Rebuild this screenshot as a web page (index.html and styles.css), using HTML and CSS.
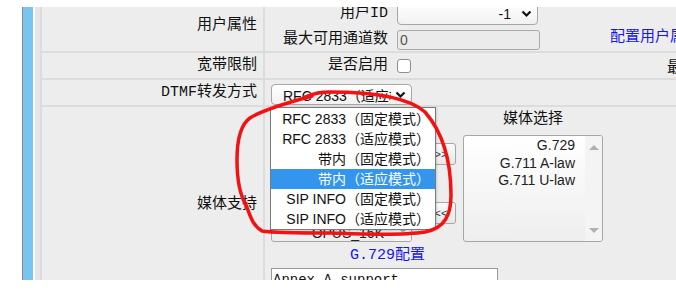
FILE: index.html
```html
<!DOCTYPE html>
<html>
    <head lang="zh">
        <meta charset="UTF-8">
        <title>用户配置</title>
        <link rel="stylesheet" href="styles.css">
    </head>
    <body>
        <div class="page">
            <div class="rail"></div>
            <div class="main">
                <div class="form">
                    <div class="row r-user">
                        <div class="lbl">用户属性</div>
                        <div class="val">
                            <div class="sub">
                                <span class="k">用户ID</span>
                                <span class="sel sel-id"><span class="v">-1</span><svg class="chev" width="11" height="8" viewBox="0 0 11 8"><polyline points="1.5,1.5 5.5,5.5 9.5,1.5"/></svg></span>
                                <span class="k">最大可用通道数</span>
                                <span class="inp">0</span>
                            </div>
                            <a class="link cfg">配置用户属性</a>
                        </div>
                    </div>
                    <div class="row r-bw">
                        <div class="lbl">宽带限制</div>
                        <div class="val">
                            <span class="k">是否启用</span>
                            <span class="chk"></span>
                            <span class="more">最大带宽</span>
                        </div>
                    </div>
                    <div class="row r-dtmf">
                        <div class="lbl">DTMF转发方式</div>
                        <div class="val">
                            <span class="sel sel-dtmf"><span class="v">RFC 2833（适应模式）</span><svg class="chev" width="11" height="8" viewBox="0 0 11 8"><polyline points="1.5,1.5 5.5,5.5 9.5,1.5"/></svg></span>
                        </div>
                    </div>
                    <div class="row r-media">
                        <div class="lbl">媒体支持</div>
                        <div class="val">
                            <div class="media">
                                <div class="hd">可选媒体</div>
                                <div></div>
                                <div class="hd">媒体选择</div>
                                <div class="list">
                                    <ul>
                                        <li>G.723</li>
                                        <li>G.726-32</li>
                                        <li>iLBC</li>
                                        <li>AMR</li>
                                        <li>OPUS_8K</li>
                                        <li>OPUS_16K</li>
                                    </ul>
                                    <div class="bar"><span class="up"></span><span class="dn"></span></div>
                                </div>
                                <div class="btns">
                                    <span class="btn">&gt;&gt;</span>
                                    <span class="btn">&lt;&lt;</span>
                                </div>
                                <div class="list">
                                    <ul>
                                        <li>G.729</li>
                                        <li>G.711 A-law</li>
                                        <li>G.711 U-law</li>
                                    </ul>
                                    <div class="bar"><span class="up"></span><span class="dn"></span></div>
                                </div>
                            </div>
                            <a class="link g729">G.729配置</a>
                            <div class="annex">Annex A support</div>
                        </div>
                    </div>
                </div>
            </div>
        </div>

        <!-- 展开的下拉框 -->
        <ul class="drop">
            <li>RFC 2833（固定模式）</li>
            <li>RFC 2833（适应模式）</li>
            <li>带内（固定模式）</li>
            <li class="on">带内（适应模式）</li>
            <li>SIP INFO（固定模式）</li>
            <li>SIP INFO（适应模式）</li>
        </ul>

        <svg class="mark" width="676" height="292" viewBox="0 0 676 292">
            <path d="M 312 96 C 290 102, 262 110, 250 118 C 240 125, 237 140, 237 160 C 237 180, 240 195, 246 205 C 250 215, 252 225, 262 231 C 275 233, 300 233, 330 233 C 360 234, 400 236, 425 232 C 445 228, 451 215, 451 195 C 451 165, 445 135, 425 112 C 408 97, 370 92, 330 92 C 322 92, 314 93, 305 97"/>
        </svg>
    </body>
</html>
```

FILE: styles.css
```css
*{
    margin:0;
    padding:0;
    box-sizing:border-box;
}
ul,ol{
    list-style:none;
}
body{
    width:676px;
    height:292px;
    overflow:hidden;
    position:relative;
    background:#fff;
    font-family:"Liberation Mono","Noto Sans CJK SC",monospace;
    font-size:15px;
    color:#111;
}
.page{
    display:flex;
    margin:7px 0 0 22px;
    height:273px;
    overflow:hidden;
}
.rail{
    width:11px;
    flex:none;
    border-left:1px solid #8a8a8a;
    background:#79c5f0;
    margin-right:2px;
}
.main{
    flex:1;
    background:#ededed;
    border-left:5px solid #e6e6e6;
}
.form{
    margin-top:-7px;
    border-left:2px solid #dcdcdc;
    width:700px;
}
.row{
    display:grid;
    grid-template-columns:223px 1fr;
    border-bottom:2px solid #dcdcdc;
}
.lbl{
    display:flex;
    align-items:center;
    justify-content:flex-end;
    padding-right:6px;
    border-right:2px solid #dcdcdc;
    line-height:20px;
    white-space:nowrap;
}
.val{
    padding-left:6px;
    display:flex;
}
.k{
    text-align:right;
    line-height:20px;
    white-space:nowrap;
}

/* 用户属性 */
.r-user{
    height:53px;
}
.r-user .val{
    padding-top:3px;
}
.sub{
    display:grid;
    grid-template-columns:117px 143px;
    grid-template-rows:22px 20px;
    column-gap:9px;
    row-gap:5px;
    align-items:center;
}
.sub .k{
    line-height:16px;
}
.sel{
    display:flex;
    align-items:center;
    height:22px;
    background:linear-gradient(#ffffff,#f1f1f1);
    border:1px solid #a6a6a6;
    border-radius:4px;
    font-family:"Liberation Sans","Noto Sans CJK SC",sans-serif;
    font-size:14px;
    overflow:hidden;
}
.sel .v{
    flex:1;
    white-space:nowrap;
    overflow:hidden;
}
.chev{
    flex:none;
    fill:none;
    stroke:#111;
    stroke-width:2.2;
}
.sel-id{
    width:141px;
}
.sel-id .v{
    text-align:right;
    padding-right:10px;
}
.sel-id .chev{
    margin-right:5px;
}
.inp{
    height:20px;
    background:#ebebeb;
    border:1px solid #a9a9a9;
    border-radius:3px;
    font-family:"Liberation Sans",sans-serif;
    font-size:14px;
    line-height:18px;
    padding-left:2px;
    color:#555;
}
.link{
    color:#1616e6;
    white-space:nowrap;
    line-height:20px;
}
.cfg{
    margin:25px 0 0 70px;
}

/* 宽带限制 */
.r-bw{
    height:27px;
}
.r-bw .val{
    align-items:center;
}
.r-bw .k{
    width:117px;
}
.chk{
    width:14px;
    height:14px;
    margin-left:9px;
    background:#fff;
    border:1px solid #8f8f8f;
    border-radius:3px;
}
.more{
    margin-left:256px;
    white-space:nowrap;
}

/* DTMF */
.r-dtmf{
    height:27px;
}
.r-dtmf .val{
    padding-top:4px;
}
.sel-dtmf{
    width:141px;
    height:21px;
}
.sel-dtmf .v{
    padding-left:11px;
    margin-right:4px;
}
.sel-dtmf .chev{
    margin-right:5px;
}

/* 媒体支持 */
.r-media{
    height:198px;
}
.r-media .val{
    flex-direction:column;
    padding-top:3px;
}
.media{
    display:grid;
    grid-template-columns:141px 51px 140px;
    grid-template-rows:20px 107px;
    row-gap:5px;
}
.hd{
    text-align:center;
    line-height:20px;
}
.list{
    display:flex;
    background:linear-gradient(#ffffff,#eeeeee);
    border:1px solid #a6a6a6;
    border-radius:3px;
    overflow:hidden;
    font-family:"Liberation Sans",sans-serif;
    font-size:14px;
}
.list ul{
    flex:1;
    padding:1px 10px 0 0;
    text-align:right;
    color:#222;
}
.list li{
    line-height:17.5px;
}
.bar{
    width:17px;
    display:flex;
    flex-direction:column;
    justify-content:space-between;
    align-items:center;
    padding:9px 0 8px;
    background:#f4f4f4;
}
.up,.dn{
    width:0;
    height:0;
    border-left:5px solid transparent;
    border-right:5px solid transparent;
}
.up{
    border-bottom:5px solid #b0b0b0;
}
.dn{
    border-top:5px solid #b0b0b0;
}
.btns{
    display:flex;
    flex-direction:column;
    align-items:flex-end;
    padding:8px 7px 0 0;
    gap:37px;
}
.btn{
    width:30px;
    height:22px;
    border:1px solid #a6a6a6;
    border-radius:3px;
    background:linear-gradient(#fafafa,#e8e8e8);
    font-family:"Liberation Sans",sans-serif;
    font-size:11px;
    line-height:20px;
    text-align:center;
    color:#333;
}
.g729{
    margin:4px 0 0 79px;
}
.annex{
    margin-top:2px;
    width:227px;
    height:24px;
    background:#fff;
    border:1px solid #9a9a9a;
    font-size:14px;
    line-height:22px;
    padding-left:1px;
}

/* 展开列表 */
.drop{
    position:absolute;
    left:270px;
    top:107px;
    width:166px;
    padding-top:1px;
    background:#fff;
    border:1px solid #7a7a7a;
    box-shadow:1px 1px 2px rgba(0,0,0,0.15);
    font-family:"Liberation Sans","Noto Sans CJK SC",sans-serif;
    font-size:14px;
    color:#111;
    text-align:right;
}
.drop li{
    height:20px;
    line-height:20px;
    padding-right:5px;
    white-space:nowrap;
}
.drop .on{
    background:#3395ee;
    color:#fff;
}

.mark{
    position:absolute;
    left:0;
    top:0;
    pointer-events:none;
}
.mark path{
    fill:none;
    stroke:#f21212;
    stroke-width:3.5;
    stroke-linecap:round;
    stroke-linejoin:round;
}
```
